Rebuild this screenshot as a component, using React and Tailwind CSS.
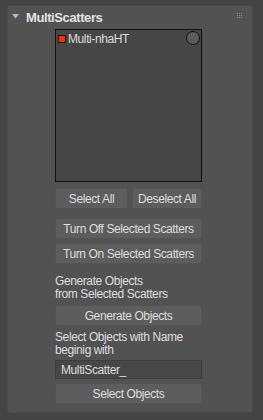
import React from "react";

const font = { fontFamily: '"Liberation Sans", Arial, sans-serif' };

function Btn({ children, className = "" }) {
  return (
    <div
      className={
        "h-[21px] flex items-center justify-center rounded-[3px] bg-[#5d5d5d] border border-[#545454] text-[12px] tracking-[-0.4px] text-[#dedede] leading-none " +
        className
      }
    >
      {children}
    </div>
  );
}

export default function App() {
  return (
    <div className="w-[263px] h-[420px] bg-[#444444] pt-[5px] pl-[7px] overflow-hidden" style={font}>
      <div className="w-[246px] h-[408px] bg-[#525252] rounded-[3px] border border-[#4a4a4a] relative">
        {/* header */}
        <div className="h-[23px] flex items-center pl-[3px]">
          <svg width="7" height="5" viewBox="0 0 7 5" className="ml-[1px] mt-[-2px]">
            <polygon points="0,0 7,0 3.5,4.5" fill="#b8b8b8" />
          </svg>
          <span className="ml-[7px] text-[13px] font-bold tracking-[-0.4px] text-[#e4e4e4]">MultiScatters</span>
        </div>
        <svg width="6" height="6" viewBox="0 0 6 6" className="absolute right-[9px] top-[7px]">
          {[0, 2, 4].map((x) =>
            [0, 2, 4].map((y) => <rect key={x + "-" + y} x={x} y={y} width="1" height="1" fill="#8a8a8a" />)
          )}
        </svg>

        <div className="ml-[47px] w-[147px] flex flex-col">
          {/* list box */}
          <div className="h-[153px] bg-[#464646] border border-[#111111] relative">
            <div className="flex items-center pl-[2px] pt-[3px]">
              <div className="w-[8px] h-[8px] bg-[#ff3000] border border-[#111111]" />
              <span className="ml-[2px] text-[12px] tracking-[-0.4px] text-[#dcdcdc] leading-none">Multi-nhaHT</span>
            </div>
            <div className="absolute right-[1px] top-[1px] w-[14px] h-[14px] rounded-full bg-[#5c5c5c] border border-[#111111]" />
          </div>

          <div className="mt-[6px] flex gap-[4px]">
            <Btn className="w-[73px]">Select All</Btn>
            <Btn className="w-[70px]">Deselect All</Btn>
          </div>
          <Btn className="mt-[9px]">Turn Off Selected Scatters</Btn>
          <Btn className="mt-[4px]">Turn On Selected Scatters</Btn>

          <div className="mt-[11px] text-[12px] tracking-[-0.4px] leading-[13px] text-[#dedede]">
            Generate Objects
            <br />
            from Selected Scatters
          </div>
          <Btn className="mt-[4px]">Generate Objects</Btn>

          <div className="mt-[5px] text-[12px] tracking-[-0.4px] leading-[13px] text-[#dedede]">
            Select Objects with Name
            <br />
            beginig with
          </div>
          <div className="mt-[3px] h-[19px] bg-[#474747] border border-[#3e3e3e] flex items-center pl-[5px] text-[12px] tracking-[-0.4px] text-[#dedede] leading-none">
            MultiScatter_
          </div>
          <Btn className="mt-[4px]">Select Objects</Btn>
        </div>
      </div>
    </div>
  );
}
